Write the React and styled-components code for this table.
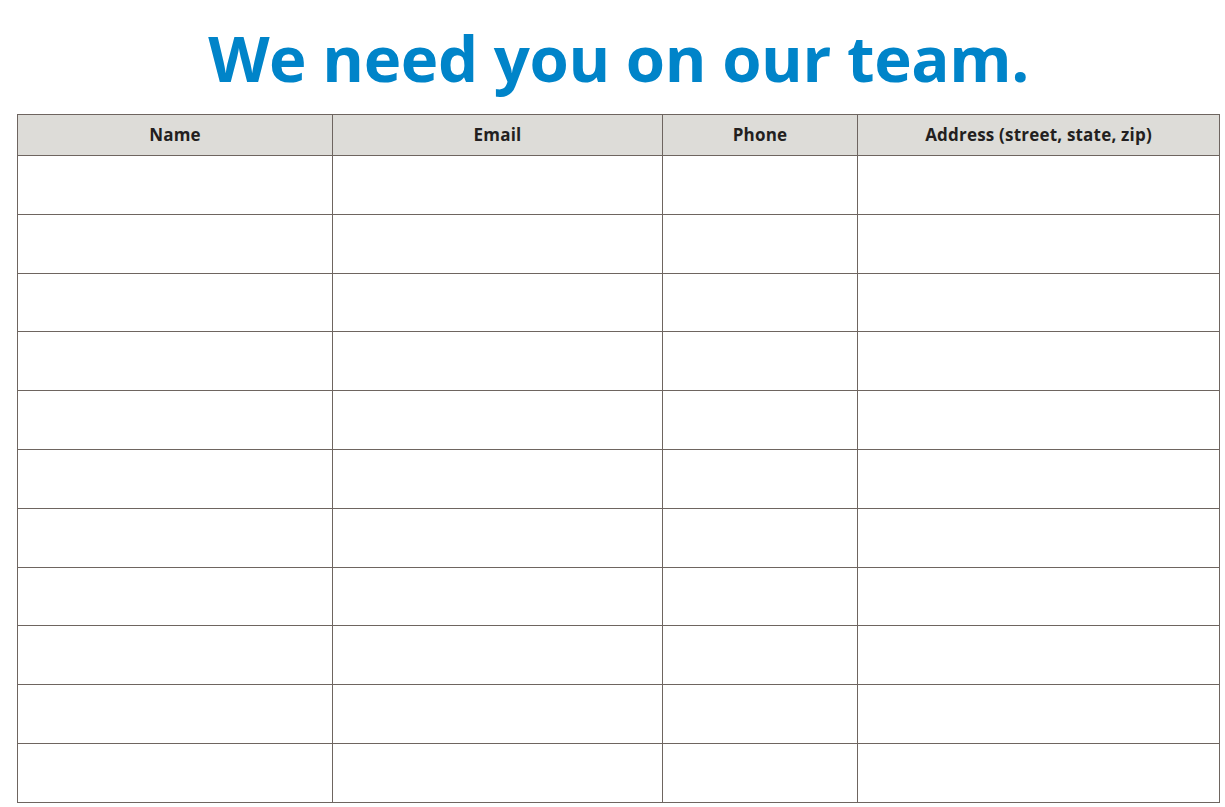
import React from "react";
import styled, { createGlobalStyle } from "styled-components";

const Global = createGlobalStyle`
  html, body { margin: 0; padding: 0; background: #ffffff; }
  body { font-family: "Open Sans", "Liberation Sans", sans-serif; }
`;

const Page = styled.div`
  width: 1225px;
  display: flex;
  flex-direction: column;
`;

const Title = styled.h1`
  margin: 0;
  height: 114px;
  display: flex;
  align-items: center;
  justify-content: center;
  font-family: "Open Sans", "Liberation Sans", sans-serif;
  font-weight: 700;
  font-size: 63.5px;
  letter-spacing: -0.4px;
  color: #0084c9;
  padding-left: 12px;
`;

const Table = styled.table`
  border-collapse: collapse;
  table-layout: fixed;
  width: 1202px;
  margin-left: 17px;
`;

const Col = styled.col`
  width: ${(p) => p.$w}px;
`;

const HeadCell = styled.th`
  height: 40px;
  padding: 0;
  background: #dddcd8;
  border: 1px solid #6e6560;
  font-family: "Open Sans", "Liberation Sans", sans-serif;
  font-weight: 700;
  font-size: 17px;
  line-height: 20px;
  letter-spacing: 0.2px;
  color: #231f20;
  text-align: center;
  vertical-align: middle;
`;

const Cell = styled.td`
  height: 57.8px;
  padding: 0;
  border: 1px solid #6e6560;
`;

const columns = [
  { label: "Name", w: 315 },
  { label: "Email", w: 330 },
  { label: "Phone", w: 195 },
  { label: "Address (street, state, zip)", w: 362 },
];

export default function App() {
  const rows = Array.from({ length: 11 });
  return (
    <Page>
      <Global />
      <Title>We need you on our team.</Title>
      <Table>
        <colgroup>
          {columns.map((c) => (
            <Col key={c.label} $w={c.w} />
          ))}
        </colgroup>
        <thead>
          <tr>
            {columns.map((c) => (
              <HeadCell key={c.label}>{c.label}</HeadCell>
            ))}
          </tr>
        </thead>
        <tbody>
          {rows.map((_, i) => (
            <tr key={i}>
              {columns.map((c) => (
                <Cell key={c.label} />
              ))}
            </tr>
          ))}
        </tbody>
      </Table>
    </Page>
  );
}
